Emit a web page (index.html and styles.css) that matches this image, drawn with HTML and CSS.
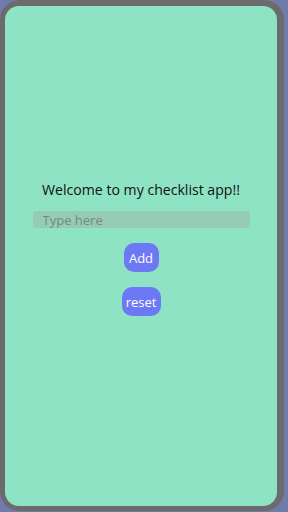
FILE: index.html
```html
<!DOCTYPE html>
<html>
<head>
<meta charset="utf-8">
<link rel="stylesheet" href="styles.css">
</head>
<body>
<div class="frame">
  <div class="screen">
    <p class="welcome">Welcome to my checklist app!!</p>
    <input class="entry" type="text" placeholder="Type here">
    <button class="btn btn-add">Add</button>
    <button class="btn btn-reset">reset</button>
  </div>
</div>
</body>
</html>
```
FILE: styles.css
```css
html, body {
  margin: 0;
  padding: 0;
  background: #6f7bab;
  width: 288px;
  height: 512px;
  overflow: hidden;
}
.frame {
  width: 284px;
  height: 511px;
  box-sizing: border-box;
  background: #6b6b6b;
  border-radius: 20px;
  padding: 6px 7px 5px 5px;
}
.screen {
  height: 100%;
  background: #8fe3c5;
  border-radius: 14px;
  display: flex;
  flex-direction: column;
  align-items: center;
  padding-top: 173px;
  box-sizing: border-box;
  font-family: "Open Sans", "Noto Sans", sans-serif;
}
.welcome {
  margin: 0;
  font-size: 14.1px;
  line-height: 22px;
  color: #111;
}
.entry {
  margin-top: 10px;
  width: 217px;
  height: 17px;
  box-sizing: border-box;
  border: none;
  outline: none;
  border-radius: 3px;
  background: #96cbb5;
  padding: 0 0 0 10px;
  font-family: "Open Sans", "Noto Sans", sans-serif;
  font-size: 13px;
  color: #333;
}
.entry::placeholder {
  color: #74897f;
}
.btn {
  border: none;
  background: #6d78f4;
  color: #fff;
  font-family: "Open Sans", "Noto Sans", sans-serif;
  font-size: 13px;
  height: 29px;
  border-radius: 10px;
  padding: 0;
}
.btn-add {
  margin-top: 15px;
  width: 35px;
}
.btn-reset {
  margin-top: 15px;
  width: 39px;
}
```
